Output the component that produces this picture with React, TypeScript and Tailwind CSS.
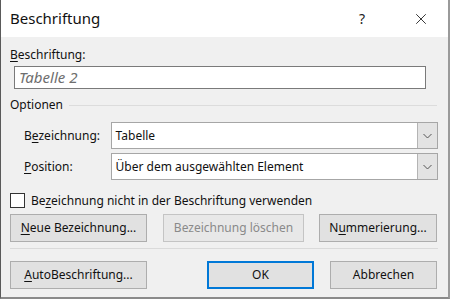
import { X } from 'lucide-react';

const font = "font-['Segoe_UI','Noto_Sans',sans-serif]";

const Btn = ({
  children,
  className = '',
  disabled = false,
}: {
  children: React.ReactNode;
  className?: string;
  disabled?: boolean;
}) => (
  <div
    className={`h-[28px] flex items-center justify-center text-[12px] ${
      disabled
        ? 'bg-[#e8e8e8] border border-[#c4c4c4] text-[#8a8a8a]'
        : 'bg-[#e1e1e1] border border-[#adadad] text-[#111]'
    } ${className}`}
  >
    {children}
  </div>
);

const Select = ({ value }: { value: string }) => (
  <div className="w-[329px] h-[27px] flex border border-[#a6a6a6] bg-white">
    <div className="flex-1 flex items-center pl-[4px] text-[12px] text-[#111]">{value}</div>
    <div className="w-[20px] bg-[#e3e3e3] border-l border-[#b4b4b4] flex items-center justify-center">
      <svg width="9" height="6" viewBox="0 0 9 6">
        <path d="M0.5 1 L4.5 5 L8.5 1" fill="none" stroke="#555" strokeWidth="1" />
      </svg>
    </div>
  </div>
);

export default function App() {
  return (
    <div className={`${font} w-[450px] h-[299px] bg-[#f0f0f0] border-l border-l-[#5a5a5a] border-r-2 border-r-[#9a9a9a] border-b-2 border-b-[#8a8a8a] flex flex-col`}>
      {/* Title bar */}
      <div className="h-[37px] bg-white flex items-center pl-[9px] pr-[18px] shrink-0">
        <span className="text-[15px] text-[#111]">Beschriftung</span>
        <span className="ml-auto text-[14px] text-[#222] mr-[47px]">?</span>
        <X size={18} strokeWidth={1.2} className="text-[#222]" />
      </div>

      <div className="flex flex-col pl-[9px] pr-[10px]">
        <div className="mt-[10px] h-[16px] text-[12px] text-[#111] leading-[16px]">
          <span className="underline underline-offset-2">B</span>eschriftung:
        </div>
        <div className="mt-[3px] ml-[4px] w-[412px] h-[23px] bg-white border border-[#7a7a7a] flex items-center pl-[4px] text-[15px] italic text-[#6e6e6e]">
          Tabelle 2
        </div>

        <div className="mt-[9px] flex items-center gap-[6px] h-[14px]">
          <span className="text-[12px] text-[#111]">Optionen</span>
          <div className="flex-1 h-px bg-[#dcdcdc] mr-[1px]" />
        </div>

        <div className="mt-[10px] flex flex-col gap-[4px] pl-[14px]">
          <div className="flex items-center">
            <span className="w-[87px] text-[12px] text-[#111]">
              B<span className="underline underline-offset-2">e</span>zeichnung:
            </span>
            <Select value="Tabelle" />
          </div>
          <div className="flex items-center">
            <span className="w-[87px] text-[12px] text-[#111]">
              <span className="underline underline-offset-2">P</span>osition:
            </span>
            <Select value="Über dem ausgewählten Element" />
          </div>
        </div>

        <div className="mt-[13px] flex items-center gap-[6px] h-[15px]">
          <div className="w-[15px] h-[15px] bg-white border border-[#333]" />
          <span className="text-[12px] text-[#111]">
            Be<span className="underline underline-offset-2">z</span>eichnung nicht in der Beschriftung verwenden
          </span>
        </div>

        <div className="mt-[6px] flex items-center">
          <Btn className="w-[137px]">
            <span>
              <span className="underline underline-offset-2">N</span>eue Bezeichnung...
            </span>
          </Btn>
          <Btn disabled className="w-[141px] ml-[16px]">
            Bezeichnung löschen
          </Btn>
          <Btn className="w-[118px] ml-[15px]">
            <span>
              N<span className="underline underline-offset-2">u</span>mmerierung...
            </span>
          </Btn>
        </div>

        <div className="mt-[6px] h-px bg-[#dadada] w-[428px]" />

        <div className="mt-[12px] flex items-center">
          <Btn className="w-[137px]">
            <span>
              <span className="underline underline-offset-2">A</span>utoBeschriftung...
            </span>
          </Btn>
          <Btn className="w-[107px] ml-[60px] border-2 !border-[#0078d7]">OK</Btn>
          <Btn className="w-[107px] ml-[16px]">Abbrechen</Btn>
        </div>
      </div>
    </div>
  );
}
